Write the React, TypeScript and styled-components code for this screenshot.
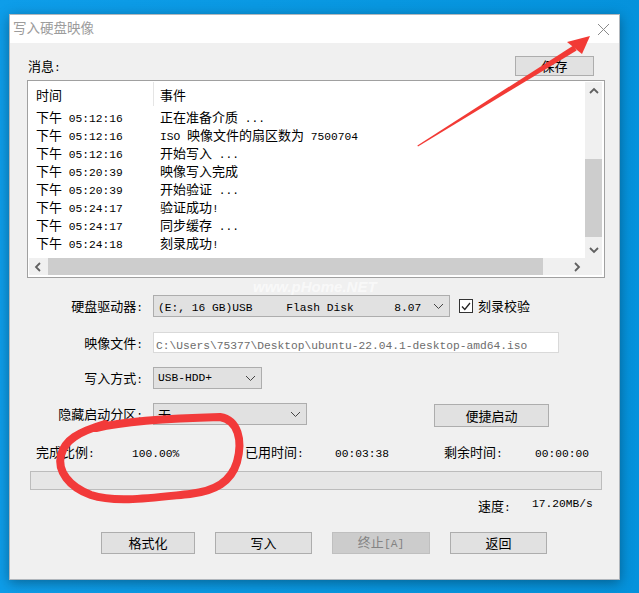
import React from 'react';
import styled, { createGlobalStyle } from 'styled-components';

const GlobalStyle = createGlobalStyle`
  html, body { margin: 0; padding: 0; }
  body { font-family: "Noto Sans CJK SC", "Liberation Sans", sans-serif; color: #000; }
  * { box-sizing: border-box; }
`;

const CJK_RE = /([\u3000-\u9fff\uff00-\uffef]+)/;

const Han = styled.span`
  font-family: "Noto Sans CJK SC", sans-serif;
  font-size: 13px;
`;

const Latin = styled.span`
  font-family: "Liberation Mono", monospace;
  font-size: 11.25px;
  white-space: pre;
`;

const TextRun = styled.span`
  white-space: pre;
`;

const Mixed: React.FC<{ text: string }> = ({ text }) => (
  <TextRun>
    {text
      .split(CJK_RE)
      .filter(Boolean)
      .map((part, i) =>
        CJK_RE.test(part) ? <Han key={i}>{part}</Han> : <Latin key={i}>{part}</Latin>
      )}
  </TextRun>
);

const Desktop = styled.div`
  position: relative;
  width: 639px;
  height: 593px;
  background: linear-gradient(90deg, #0e9de9 0%, #0897e0 60%, #0592dc 100%);
  padding: 14px 0 0 9px;
  overflow: hidden;
`;

const Window = styled.div`
  width: 611px;
  height: 566px;
  border: 1px solid #b0b6bc;
  background: #f0f0f0;
  box-shadow: 0 3px 12px rgba(0, 0, 0, 0.35);
  display: flex;
  flex-direction: column;
`;

const TitleBar = styled.div`
  height: 28px;
  background: #fff;
  display: flex;
  align-items: center;
  justify-content: space-between;
  padding: 0 9px 0 3px;
`;

const Title = styled.span`
  align-self: flex-start;
  font-size: 13.5px;
  line-height: 25px;
  color: #9c9c9c;
`;

const Body = styled.div`
  flex: 1;
  display: flex;
  flex-direction: column;
  padding: 13px 14px 0 17px;
`;

const MessageHeader = styled.div`
  height: 20px;
  display: flex;
  align-items: center;
  justify-content: space-between;
  padding: 0 11px 0 1px;
  margin-bottom: 4px;
  line-height: 16px;
`;

const Button = styled.button<{ $w: number; $h?: number; $disabled?: boolean }>`
  width: ${(p) => p.$w}px;
  height: ${(p) => p.$h ?? 22}px;
  padding: 0;
  margin: 0;
  background: ${(p) => (p.$disabled ? '#cccccc' : '#e1e1e1')};
  border: 1px solid ${(p) => (p.$disabled ? '#bfbfbf' : '#adadad')};
  color: ${(p) => (p.$disabled ? '#838383' : '#000')};
  font-family: "Noto Sans CJK SC", sans-serif;
  font-size: 13px;
  line-height: 16px;
  display: flex;
  align-items: center;
  justify-content: center;
`;

const ListBox = styled.div`
  height: 198px;
  border: 1px solid #a0a0a0;
  padding: 1px 2px 2px 1px;
  background: #fff;
  display: grid;
  grid-template-columns: 1fr 17px;
  grid-template-rows: 1fr 17px;
  overflow: hidden;
`;

const ListContent = styled.div`
  overflow: hidden;
`;

const HeaderRow = styled.div`
  display: grid;
  grid-template-columns: 124px 1fr;
  height: 25px;
`;

const HeaderCell = styled.div<{ $divider?: boolean }>`
  height: 24px;
  line-height: 22px;
  padding-left: ${(p) => (p.$divider ? 6 : 7)}px;
  border-left: ${(p) => (p.$divider ? '1px solid #e5e5e5' : 'none')};
`;

const Row = styled.div`
  display: grid;
  grid-template-columns: 124px 1fr;
  height: 18px;
  line-height: 16px;
`;

const Cell = styled.div`
  padding-left: 7px;
  white-space: nowrap;
`;

const VScroll = styled.div`
  background: #f0f0f0;
  display: flex;
  flex-direction: column;
`;

const HScroll = styled.div`
  background: #f0f0f0;
  display: flex;
`;

const ArrowBox = styled.div`
  width: 17px;
  height: 17px;
  flex: none;
  display: flex;
  align-items: center;
  justify-content: center;
`;

const VTrack = styled.div`
  flex: 1;
  padding-top: 60px;
`;

const VThumb = styled.div`
  height: 78px;
  background: #cdcdcd;
`;

const HTrack = styled.div`
  flex: 1;
  padding-left: 2px;
  display: flex;
`;

const HThumb = styled.div`
  width: 495px;
  height: 17px;
  background: #cdcdcd;
`;

const Corner = styled.div`
  background: #f0f0f0;
`;

const FormGrid = styled.div`
  margin-top: 17px;
  display: grid;
  grid-template-columns: 116px 1fr;
  grid-template-rows: 23px 21px 22px 22px;
  column-gap: 10px;
  row-gap: 14px;
`;

const FieldLabel = styled.div`
  text-align: right;
  line-height: 19px;
  white-space: nowrap;
`;

const ControlCell = styled.div`
  display: flex;
  align-items: flex-start;
`;

const Select = styled.div<{ $w: number }>`
  width: ${(p) => p.$w}px;
  height: 22px;
  background: #e1e1e1;
  border: 1px solid #adadad;
  display: flex;
  align-items: center;
  justify-content: space-between;
  padding: 0 5px 0 4px;
  line-height: 19px;
  flex: none;
`;

const TextField = styled.div`
  width: 406px;
  height: 21px;
  background: #fff;
  border: 1px solid #d9d9d9;
  padding-left: 2px;
  line-height: 18px;
  color: #6d6d6d;
`;

const CheckWrap = styled.div`
  display: flex;
  align-items: center;
  height: 22px;
  margin-left: 9px;
  gap: 5px;
  line-height: 16px;
`;

const CheckBox = styled.div`
  width: 14px;
  height: 14px;
  border: 1px solid #333;
  background: #fff;
  display: flex;
  align-items: center;
  justify-content: center;
`;

const QuickButtonSlot = styled.div`
  margin-left: 127px;
  margin-top: 1px;
`;

const StatsRow = styled.div`
  margin-top: 17px;
  height: 16px;
  line-height: 16px;
  display: grid;
  grid-template-columns: 96px 113px 90px 109px 91px auto;
  padding-left: 9px;
  white-space: nowrap;
`;

const ProgressBar = styled.div`
  margin: 13px 0 0 3px;
  width: 572px;
  height: 19px;
  background: #e6e6e6;
  border: 1px solid #bcbcbc;
`;

const SpeedRow = styled.div`
  margin-top: 6px;
  height: 16px;
  line-height: 16px;
  display: flex;
  padding-left: 451px;
  white-space: nowrap;
`;

const SpeedLabel = styled.div`
  width: 54px;
`;

const ButtonRow = styled.div`
  margin-top: 20px;
  display: flex;
  gap: 20px;
  padding-left: 74px;
`;

const Overlay = styled.svg`
  position: absolute;
  left: 0;
  top: 0;
  pointer-events: none;
`;

const Watermark = styled.div`
  position: absolute;
  left: 253px;
  top: 278px;
  font-family: "Liberation Sans", sans-serif;
  font-weight: bold;
  font-style: italic;
  font-size: 15px;
  line-height: 17px;
  color: rgba(255, 255, 255, 0.6);
  pointer-events: none;
`;

const Chevron: React.FC<{ dir: 'up' | 'down' | 'left' | 'right' }> = ({ dir }) => {
  const pts = {
    up: '1,6 5,2 9,6',
    down: '1,2 5,6 9,2',
    left: '6,1 2,5 6,9',
    right: '2,1 6,5 2,9',
  }[dir];
  const vertical = dir === 'up' || dir === 'down';
  return (
    <svg width={vertical ? 10 : 8} height={vertical ? 8 : 10} viewBox={vertical ? '0 0 10 8' : '0 0 8 10'}>
      <polyline points={pts} fill="none" stroke="#606060" strokeWidth="1.8" />
    </svg>
  );
};

const DropArrow = () => (
  <svg width="11" height="7" viewBox="0 0 11 7">
    <polyline points="1,1 5.5,5.5 10,1" fill="none" stroke="#444" strokeWidth="1" />
  </svg>
);

const CloseIcon = () => (
  <svg width="13" height="13" viewBox="0 0 13 13">
    <path d="M1 1 L12 12 M12 1 L1 12" stroke="#8a8a8a" strokeWidth="1" />
  </svg>
);

const rows: [string, string][] = [
  ['05:12:16', '正在准备介质 ...'],
  ['05:12:16', 'ISO 映像文件的扇区数为 7500704'],
  ['05:12:16', '开始写入 ...'],
  ['05:20:39', '映像写入完成'],
  ['05:20:39', '开始验证 ...'],
  ['05:24:17', '验证成功!'],
  ['05:24:17', '同步缓存 ...'],
  ['05:24:18', '刻录成功!'],
];

export default function App() {
  return (
    <>
      <GlobalStyle />
      <Desktop>
        <Window>
          <TitleBar>
            <Title>写入硬盘映像</Title>
            <CloseIcon />
          </TitleBar>
          <Body>
            <MessageHeader>
              <Mixed text="消息:" />
              <Button $w={79} $h={20}>保存</Button>
            </MessageHeader>
            <ListBox>
              <ListContent>
                <HeaderRow>
                  <HeaderCell><Han>时间</Han></HeaderCell>
                  <HeaderCell $divider><Han>事件</Han></HeaderCell>
                </HeaderRow>
                {rows.map(([t, e], i) => (
                  <Row key={i}>
                    <Cell><Mixed text={`下午 ${t}`} /></Cell>
                    <Cell><Mixed text={e} /></Cell>
                  </Row>
                ))}
              </ListContent>
              <VScroll>
                <ArrowBox><Chevron dir="up" /></ArrowBox>
                <VTrack><VThumb /></VTrack>
                <ArrowBox><Chevron dir="down" /></ArrowBox>
              </VScroll>
              <HScroll>
                <ArrowBox><Chevron dir="left" /></ArrowBox>
                <HTrack><HThumb /></HTrack>
                <ArrowBox><Chevron dir="right" /></ArrowBox>
              </HScroll>
              <Corner />
            </ListBox>

            <FormGrid>
              <FieldLabel><Mixed text="硬盘驱动器:" /></FieldLabel>
              <ControlCell>
                <Select $w={297}>
                  <Mixed text="(E:, 16 GB)USB     Flash Disk      8.07" />
                  <DropArrow />
                </Select>
                <CheckWrap>
                  <CheckBox>
                    <svg width="10" height="9" viewBox="0 0 10 9">
                      <polyline points="1,4.5 3.8,7.5 9,1" fill="none" stroke="#222" strokeWidth="1.3" />
                    </svg>
                  </CheckBox>
                  <Han>刻录校验</Han>
                </CheckWrap>
              </ControlCell>

              <FieldLabel><Mixed text="映像文件:" /></FieldLabel>
              <ControlCell>
                <TextField>
                  <Latin>C:\Users\75377\Desktop\ubuntu-22.04.1-desktop-amd64.iso</Latin>
                </TextField>
              </ControlCell>

              <FieldLabel><Mixed text="写入方式:" /></FieldLabel>
              <ControlCell>
                <Select $w={109}>
                  <Latin>USB-HDD+</Latin>
                  <DropArrow />
                </Select>
              </ControlCell>

              <FieldLabel><Mixed text="隐藏启动分区:" /></FieldLabel>
              <ControlCell>
                <Select $w={154}>
                  <Han>无</Han>
                  <DropArrow />
                </Select>
                <QuickButtonSlot>
                  <Button $w={115} $h={23}>便捷启动</Button>
                </QuickButtonSlot>
              </ControlCell>
            </FormGrid>

            <StatsRow>
              <div><Mixed text="完成比例:" /></div>
              <div><Latin>100.00%</Latin></div>
              <div><Mixed text="已用时间:" /></div>
              <div><Latin>00:03:38</Latin></div>
              <div><Mixed text="剩余时间:" /></div>
              <div><Latin>00:00:00</Latin></div>
            </StatsRow>

            <ProgressBar />

            <SpeedRow>
              <SpeedLabel><Mixed text="速度:" /></SpeedLabel>
              <Latin>17.20MB/s</Latin>
            </SpeedRow>

            <ButtonRow>
              <Button $w={94}>格式化</Button>
              <Button $w={97}>写入</Button>
              <Button $w={98} $disabled><Mixed text="终止[A]" /></Button>
              <Button $w={97}>返回</Button>
            </ButtonRow>
          </Body>
        </Window>

        <Watermark>www.pHome.NET</Watermark>

        <Overlay width="639" height="593" viewBox="0 0 639 593">
          <polygon points="418,146.6 417.4,145.4 573.4,45.5 576.6,50.5" fill="#f23a35" />
          <polygon points="590,36 567,42 582,54" fill="#f23a35" />
          <path
            d="M96 428 C130 420, 180 418, 220 417 C238 420, 243 440, 237 462 C231 482, 215 491, 190 494 C150 498, 115 503, 91 495 C69 487, 57 471, 61 455 C65 440, 78 432, 105 424"
            fill="none"
            stroke="#f23a3a"
            strokeWidth="8"
            strokeLinecap="round"
          />
        </Overlay>
      </Desktop>
    </>
  );
}
